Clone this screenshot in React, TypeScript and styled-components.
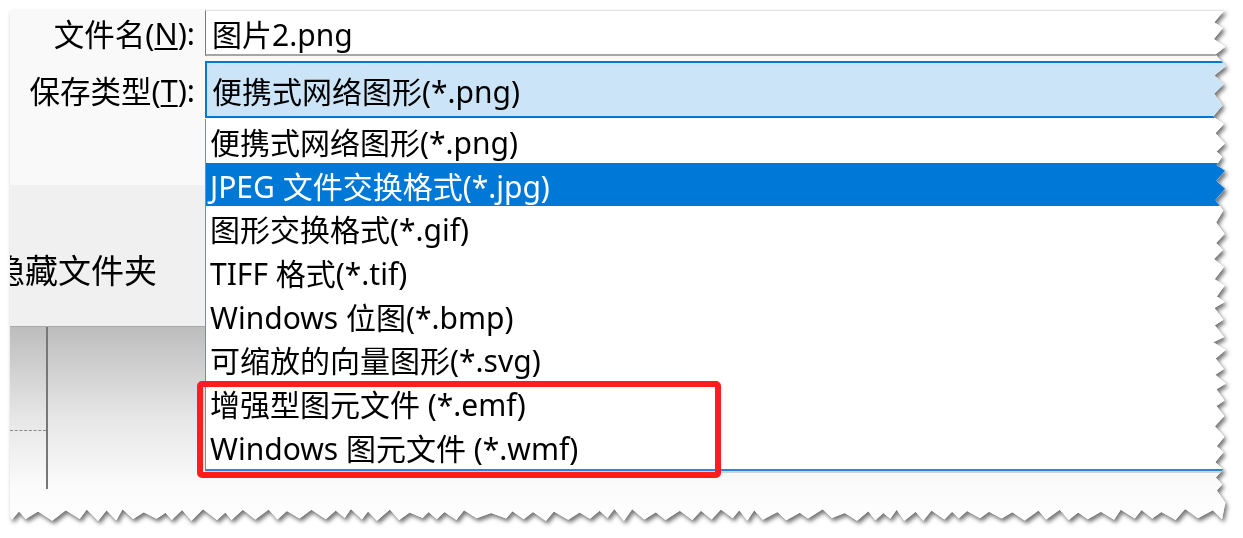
import React from 'react';
import styled, { createGlobalStyle } from 'styled-components';

const GlobalStyle = createGlobalStyle`
  html, body { margin: 0; padding: 0; background: #ffffff; }
  body { font-family: "Noto Sans", "Noto Sans CJK SC", sans-serif; color: #000; }
`;

function buildTornClip(): string {
  let seed = 11;
  const rnd = () => {
    seed = (seed * 9301 + 49297) % 233280;
    return seed / 233280;
  };
  const pts: string[] = ['0px 0px'];
  let y = 0;
  let out = true;
  while (y < 503) {
    const x = out ? 1212 + rnd() * 4 : 1203 + rnd() * 4;
    pts.push(`${x.toFixed(1)}px ${y.toFixed(1)}px`);
    y += 5 + rnd() * 8;
    out = !out;
  }
  let x = 1212;
  out = true;
  while (x > 0) {
    const yy = out ? 508 + rnd() * 3 : 499 + rnd() * 4;
    pts.push(`${x.toFixed(1)}px ${yy.toFixed(1)}px`);
    x -= 6 + rnd() * 9;
    out = !out;
  }
  pts.push('0px 506px');
  return `polygon(${pts.join(', ')})`;
}

const TORN = buildTornClip();

const Frame = styled.div`
  padding: 10px 0 0 10px;
  width: 1243px;
  height: 538px;
  box-sizing: border-box;
  overflow: hidden;
  filter: drop-shadow(2px 3px 2px rgba(0, 0, 0, 0.55));
`;

const Sheet = styled.div<{ $clip: string }>`
  position: relative;
  width: 1230px;
  height: 520px;
  overflow: hidden;
  background: #ffffff;
  clip-path: ${(p) => p.$clip};
  display: flex;
  flex-direction: column;
`;

const FormArea = styled.div`
  height: 175px;
  flex: none;
  background: #f9f9f9;
  display: grid;
  grid-template-columns: 195px 1fr;
  grid-template-rows: 46px 57px;
  row-gap: 5px;
  align-items: stretch;
  position: relative;
  z-index: 2;
`;

const Label = styled.div`
  display: flex;
  align-items: center;
  justify-content: flex-end;
  padding-right: 10px;
  font-size: 30.5px;
  white-space: nowrap;
  u {
    text-decoration-thickness: 2px;
    text-underline-offset: 3px;
  }
`;

const TextInput = styled.div`
  background: #ffffff;
  border-left: 1px solid #7a7a7a;
  border-bottom: 2px solid #a6a6a6;
  border-top: 1px solid #e2e2e2;
  display: flex;
  align-items: center;
  padding-left: 6px;
  font-size: 30px;
  white-space: nowrap;
`;

const SelectWrap = styled.div`
  position: relative;
`;

const SelectBox = styled.div`
  height: 100%;
  box-sizing: border-box;
  background: #cce4f7;
  border: 2px solid #0078d7;
  border-right: none;
  display: flex;
  align-items: center;
  padding-left: 5px;
  font-size: 30px;
  white-space: nowrap;
`;

const DropList = styled.ul`
  position: absolute;
  top: calc(100% + 1px);
  left: 0;
  right: 0;
  margin: 0;
  padding: 0;
  list-style: none;
  background: #ffffff;
  border-left: 1px solid #4f98dc;
  border-bottom: 2px solid #2d84d6;
  box-shadow: 0 2px 0 #d2d2d2;
`;

const Option = styled.li<{ $active?: boolean }>`
  height: 43.7px;
  display: flex;
  align-items: center;
  padding-left: 4px;
  font-size: 30px;
  white-space: nowrap;
  background: ${(p) => (p.$active ? '#0078d7' : 'transparent')};
  color: ${(p) => (p.$active ? '#ffffff' : '#000000')};
`;

const Toolbar = styled.div`
  height: 141px;
  flex: none;
  background: #f0f0f0;
  overflow: hidden;
  padding-top: 66px;
  box-sizing: border-box;
`;

const HideFolders = styled.div`
  font-size: 33px;
  line-height: 40px;
  margin-left: -18px;
  white-space: nowrap;
`;

const Lower = styled.div`
  flex: 1;
  border-top: 1px solid #a9a9a9;
  background: linear-gradient(to bottom, #bdbdbd 0px, #e6e6e6 90px, #fbfbfb 160px, #ffffff 200px);
  display: flex;
`;

const NavColumn = styled.div`
  width: 36px;
  height: 162px;
  border-right: 2px solid #777777;
  position: relative;
`;

const Dotted = styled.div`
  margin-top: 103px;
  border-top: 1px dashed #8a8a8a;
`;

const Annotation = styled.div`
  position: absolute;
  left: 187px;
  top: 371px;
  width: 524px;
  height: 97px;
  box-sizing: border-box;
  border: 6px solid #ff1d1d;
  border-radius: 5px;
  pointer-events: none;
  z-index: 5;
`;

const formats = [
  '便携式网络图形(*.png)',
  'JPEG 文件交换格式(*.jpg)',
  '图形交换格式(*.gif)',
  'TIFF 格式(*.tif)',
  'Windows 位图(*.bmp)',
  '可缩放的向量图形(*.svg)',
  '增强型图元文件 (*.emf)',
  'Windows 图元文件 (*.wmf)',
];

export default function App() {
  return (
    <>
      <GlobalStyle />
      <Frame>
        <Sheet $clip={TORN}>
          <FormArea>
            <Label>
              文件名(<u>N</u>):
            </Label>
            <TextInput>图片2.png</TextInput>
            <Label>
              保存类型(<u>T</u>):
            </Label>
            <SelectWrap>
              <SelectBox>便携式网络图形(*.png)</SelectBox>
              <DropList>
                {formats.map((f, i) => (
                  <Option key={f} $active={i === 1}>
                    {f}
                  </Option>
                ))}
              </DropList>
            </SelectWrap>
          </FormArea>
          <Toolbar>
            <HideFolders>隐藏文件夹</HideFolders>
          </Toolbar>
          <Lower>
            <NavColumn>
              <Dotted />
            </NavColumn>
          </Lower>
          <Annotation />
        </Sheet>
      </Frame>
    </>
  );
}
